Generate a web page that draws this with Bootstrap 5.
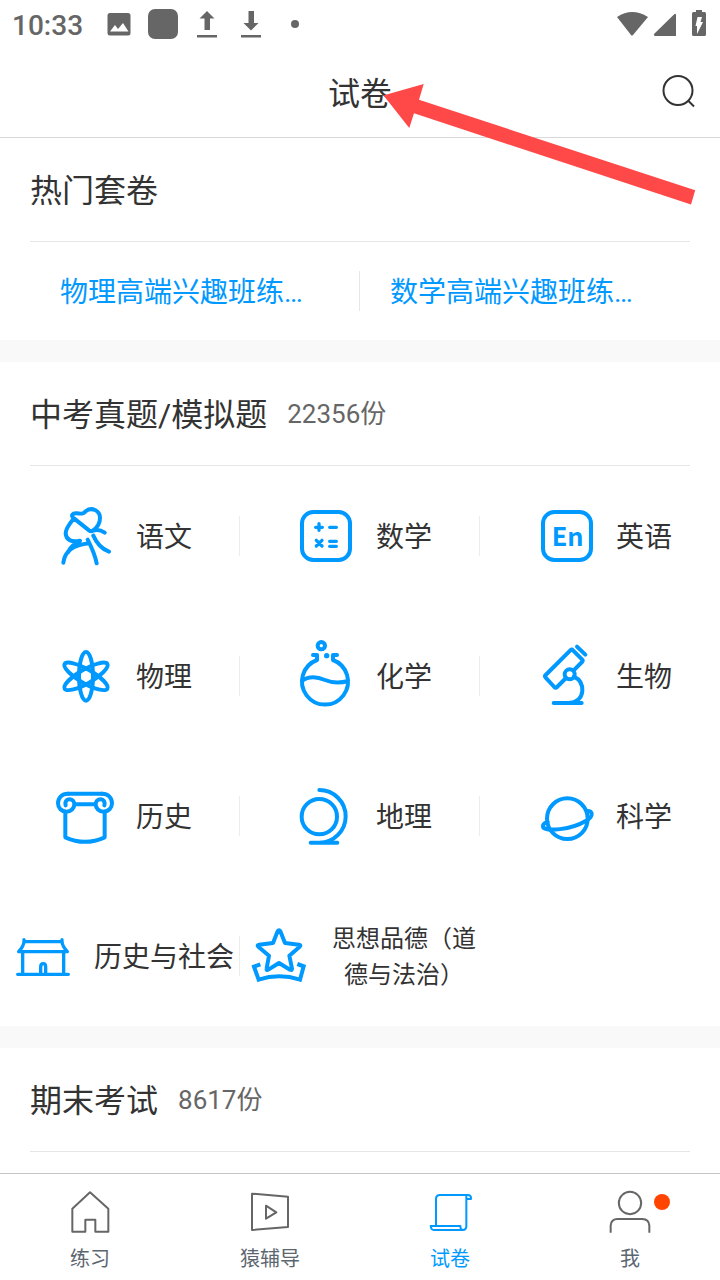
<!DOCTYPE html>
<html lang="zh-CN">
<head>
<meta charset="utf-8">
<meta name="viewport" content="width=device-width, initial-scale=1">
<title>试卷</title>
<link href="https://cdn.jsdelivr.net/npm/bootstrap@5.3.0/dist/css/bootstrap.min.css" rel="stylesheet">
<style>
  body { font-family: Roboto, "Noto Sans CJK SC", sans-serif; color: #333; background: #fff; }
  a { text-decoration: none; color: inherit; }
  svg { display: block; flex: none; }
  .status-bar { height: 48px; color: #666; padding: 0 4px 0 12px; }
  .clock { font-size: 28px; font-weight: 500; line-height: 44px; padding-top: 4px; width: 78px; }
  .status-left { gap: 14px; }
  .status-right { gap: 2px; }
  .page-head { height: 90px; border-bottom: 1px solid #d9d9d9; padding: 0 20px; }
  .head-side { width: 42px; height: 42px; }
  .title-text { font-size: 32px; line-height: 48px; font-weight: 400; padding-top: 2px; }
  .pointer { left: 56px; top: 16px; z-index: 2; pointer-events: none; }
  .section-inner { padding: 0 30px; }
  .section-head { height: 104px; border-bottom: 1px solid #e6e6e6; gap: 20px; }
  .count-text { font-size: 26px; line-height: 48px; color: #666; }
  .hot-link { height: 98px; padding: 4px 30px 0; font-size: 28px; line-height: 40px; color: #0099ff; }
  .divided { background: linear-gradient(#e6e6e6, #e6e6e6) right center / 1px 40px no-repeat; }
  .subject.divided { background-image: linear-gradient(#ececec, #ececec); }
  .band { height: 22px; background: #f9f9f9; }
  .subject { height: 140px; padding-left: 2px; gap: 14px; font-size: 28px; line-height: 40px; }
  .subject span { padding-top: 4px; }
  .subject .subject-long { font-size: 24px; line-height: 36px; text-align: center; padding-top: 2px; }
  .line-icon { fill: none; stroke: #0099ff; stroke-width: 12; stroke-linecap: round; stroke-linejoin: round; }
  .tab-strip { border-top: 1px solid #c4c4c4; background: #fff; padding-top: 14px; color: #5b6670; }
  .tab-strip a { font-size: 20px; line-height: 42px; }
  .tab-label { padding-top: 2px; }
  .tab-strip .current { color: #0099ff; }
  .tab-icon { fill: none; stroke: #666; stroke-width: 6; stroke-linejoin: round; }
  .current .tab-icon { stroke: #0099ff; }
  .alert-dot { left: 48px; top: 6px; width: 16px; height: 16px; background: #ff4400; }
</style>
</head>
<body>
<div class="d-flex flex-column min-vh-100">

  <div class="status-bar d-flex align-items-center justify-content-between">
    <div class="status-left d-flex align-items-center">
      <div class="clock">10:33</div>
      <svg width="30" height="30" viewBox="0 0 30 30" fill="currentColor"><rect x="3.500" y="4" width="23" height="22.500" rx="2.500"/><path d="M6 22.500 11 16l3 4 5-6 5.500 8.500z" fill="#fff"/></svg>
      <svg width="30" height="30" viewBox="0 0 30 30" fill="currentColor"><rect width="30" height="30" rx="7"/></svg>
      <svg width="30" height="30" viewBox="0 0 30 30" fill="currentColor"><path d="M15 2 22.500 9.500H18V21H12.500V9.500H7.500zM5 26h20v2.500H5z"/></svg>
      <svg width="30" height="30" viewBox="0 0 30 30" fill="currentColor"><path d="M12.500 2H18V14h4.500L15 21.500 7.500 14h5zM5 26h20v2.500H5z"/></svg>
      <svg width="30" height="30" viewBox="0 0 30 30" fill="currentColor"><circle cx="15" cy="15" r="4"/></svg>
    </div>
    <div class="status-right d-flex">
      <svg width="32" height="30" viewBox="0 0 32 30" fill="currentColor"><path d="M1 8Q16-2 32 8L17 26Q16 27 15 26z"/></svg>
      <svg width="32" height="30" viewBox="0 0 32 30" fill="currentColor"><path d="M26 6V27H5Q3 26 4.500 24.500L24 5.500Q25.500 4 26 6z"/></svg>
      <svg width="32" height="30" viewBox="0 0 32 30" fill="currentColor"><path d="M12 1h6v2h2.500Q22 3 22 4.500V25.500Q22 27 20.500 27H9.500Q8 27 8 25.500V4.500Q8 3 9.500 3H12z"/><path d="M13.500 8H18L16.500 13H19L13 25V17H11.500z" fill="#fff"/></svg>
    </div>
  </div>

  <header class="page-head d-flex align-items-center justify-content-between">
    <div class="head-side"></div>
    <div class="position-relative">
      <h1 class="title-text mb-0">试卷</h1>
      <svg class="pointer position-absolute" width="312" height="121" viewBox="384 84 312 121" fill="#ff4848"><path d="M383.500 95.300 423.700 84 419 99.700 695.200 190.300 691 204.600 414 113.300 409.300 128z"/></svg>
    </div>
    <button type="button" class="head-side btn p-0 border-0" aria-label="搜索">
      <svg width="42" height="42" viewBox="658 72 42 42" fill="none" stroke="#333" stroke-width="2"><circle cx="678" cy="90.500" r="14.500"/><path d="M688 100.500 694 106.500"/></svg>
    </button>
  </header>

  <main>
    <section class="section-inner">
      <div class="section-head d-flex align-items-center"><h2 class="title-text mb-0">热门套卷</h2></div>
      <div class="row g-0">
        <a href="#" class="col-6 hot-link divided d-flex align-items-center text-nowrap">物理高端兴趣班练…</a>
        <a href="#" class="col-6 hot-link d-flex align-items-center text-nowrap">数学高端兴趣班练…</a>
      </div>
    </section>
    <div class="band"></div>

    <section>
      <div class="section-inner">
        <div class="section-head d-flex align-items-center"><h2 class="title-text mb-0">中考真题/模拟题</h2><span class="count-text">22356份</span></div>
      </div>
      <div class="row g-0">
        <a href="#" class="col-4 subject divided d-flex align-items-center justify-content-center">
          <svg class="line-icon" width="72" height="72" viewBox="30 30 216 216"><path d="M100 84C92 76 98 69 110 70C134 73 132 68 138 63C154 51 180 60 180 84C180 103 168 116 157 123Q152 125 147 121L102 85C92 97 77 114 77 130C78 149 94 158 120 152M157 123C169 118 184 121 194 128M160 137Q176 174 207 185M143 149Q164 190 170 220M70 218C75 182 99 165 148 160M85 186Q93 165 119 154"/></svg>
          <span>语文</span></a>
        <a href="#" class="col-4 subject divided d-flex align-items-center justify-content-center">
          <svg class="line-icon" width="72" height="72" viewBox="30 30 216 216"><rect x="66" y="66" width="144" height="144" rx="34"/><g stroke-width="10"><path d="M107 112H127M117 101V121M149 112H169M109 151 126 168M126 151 109 168M149 154H169M149 169H169"/></g></svg>
          <span>数学</span></a>
        <a href="#" class="col-4 subject d-flex align-items-center justify-content-center">
          <svg class="line-icon" width="72" height="72" viewBox="750 30 216 216"><rect x="789" y="66" width="144" height="144" rx="34"/><text x="863" y="167" text-anchor="middle" font-family="Noto Sans CJK SC, sans-serif" font-weight="700" font-size="76" fill="#0099ff" stroke="none">En</text></svg>
          <span>英语</span></a>

        <a href="#" class="col-4 subject divided d-flex align-items-center justify-content-center">
          <svg class="line-icon" width="72" height="72" viewBox="30 30 216 216"><ellipse cx="138" cy="139" rx="21" ry="73"/><ellipse cx="138" cy="139" rx="21" ry="74" transform="rotate(60 138 139)"/><ellipse cx="138" cy="139" rx="21" ry="74" transform="rotate(-60 138 139)"/></svg>
          <span>物理</span></a>
        <a href="#" class="col-4 subject divided d-flex align-items-center justify-content-center">
          <svg class="line-icon" width="72" height="72" viewBox="30 30 216 216"><path d="M99 75H111V90A69 69 0 1 0 159 90V75H171M66 153C86 138 111 140 135 150S180 160 204 153"/><circle cx="124" cy="47" r="11"/><circle cx="140" cy="77" r="8" fill="#0099ff" stroke="none"/></svg>
          <span>化学</span></a>
        <a href="#" class="col-4 subject d-flex align-items-center justify-content-center">
          <svg class="line-icon" width="72" height="72" viewBox="750 30 216 216"><path d="M858 144 831 171Q827 175 823 171L797 143Q793 139 797 135L871 61Q875 57 879 61L906 88Q910 92 906 96L881 121M891 50 916 74M882 140C903 150 908 166 907 183C905 205 889 219 865 219M821 219H905"/><circle cx="869" cy="133" r="15"/></svg>
          <span>生物</span></a>

        <a href="#" class="col-4 subject divided d-flex align-items-center justify-content-center">
          <svg class="line-icon" width="72" height="72" viewBox="30 30 216 216"><path d="M76 125V202Q135 229 194 202V125M84 71H187M106 103H165"/><path id="scroll-end" d="M85 71C66 70 54 84 54 100C54 114 65 125 79 125C93 125 103 115 103 103C103 94 97 88 88 88C79 88 74 96 77 106"/><use href="#scroll-end" transform="translate(270 0) scale(-1 1)"/></svg>
          <span>历史</span></a>
        <a href="#" class="col-4 subject divided d-flex align-items-center justify-content-center">
          <svg class="line-icon" width="72" height="72" viewBox="30 30 216 216"><circle cx="118" cy="140" r="53"/><path d="M118 60A79 79 0 0 1 118 218M92 218H172"/></svg>
          <span>地理</span></a>
        <a href="#" class="col-4 subject d-flex align-items-center justify-content-center">
          <svg class="line-icon" width="72" height="72" viewBox="750 30 216 216"><circle cx="862" cy="146" r="61"/><path d="M803 156C791 159 787 166 789 171C797 186 874 179 917 153C938 143 943 121 920 123"/></svg>
          <span>科学</span></a>

        <a href="#" class="col-4 subject divided d-flex align-items-center justify-content-center">
          <svg class="line-icon" width="72" height="72" viewBox="24 30 216 216"><g stroke-width="10"><path d="M72 89V95Q71 109 56 125H202Q187 109 186 95V89M72 95H186M68 125V193M191 125V193M53 193H205M122 191V171Q122 161 130 161Q137 161 137 171V191"/></g></svg>
          <span>历史与社会</span></a>
        <a href="#" class="col-4 subject d-flex align-items-center justify-content-center">
          <svg class="line-icon" width="72" height="72" viewBox="726 30 216 216"><path d="M833 64Q837 57 841 64L855 99 897 104Q904 106 899 110L868 137 876 176Q877 182 870 179L837 159 805 179Q798 182 800 175L807 137 775 110Q770 105 777 104L819 99z"/><path stroke-linecap="butt" stroke-linejoin="miter" d="M781 163 762 170 776 209Q837 189 900 209L911 169 892 162"/></svg>
          <span class="subject-long">思想品德（道德与法治）</span></a>
      </div>
    </section>
    <div class="band"></div>

    <section class="section-inner">
      <div class="section-head d-flex align-items-center"><h2 class="title-text mb-0">期末考试</h2><span class="count-text">8617份</span></div>
    </section>
  </main>

  <nav class="tab-strip sticky-bottom mt-auto">
    <div class="row g-0">
      <a href="#" class="col-3 d-flex flex-column align-items-center">
        <svg class="tab-icon" width="48" height="48" viewBox="198 84 144 144"><path d="M270 97 325 146V215H286V179H256V215H217V146z"/></svg>
        <span class="tab-label">练习</span></a>
      <a href="#" class="col-3 d-flex flex-column align-items-center">
        <svg class="tab-icon" width="48" height="48" viewBox="738 84 144 144"><path d="M756 101 864 110V201L756 210zM798 137 829 157 798 176z"/></svg>
        <span class="tab-label">猿辅导</span></a>
      <a href="#" class="col-3 current d-flex flex-column align-items-center" aria-current="page">
        <svg class="tab-icon" width="48" height="48" viewBox="198 84 144 144"><path d="M228 197V117Q228 105 240 105H325Q334 106 333 117H319M319 105V198Q319 210 308 210Q301 210 301 198H212Q213 210 222 210H308"/></svg>
        <span class="tab-label">试卷</span></a>
      <a href="#" class="col-3 d-flex flex-column align-items-center">
        <span class="position-relative"><svg class="tab-icon" width="48" height="48" viewBox="738 84 144 144"><circle cx="810" cy="129" r="33.500"/><path d="M752 218V197Q753 177 773 177H847Q867 178 868 197V218"/></svg><i class="alert-dot position-absolute rounded-circle"></i></span>
        <span class="tab-label">我</span></a>
    </div>
  </nav>
</div>
<script src="https://cdn.jsdelivr.net/npm/bootstrap@5.3.0/dist/js/bootstrap.bundle.min.js"></script>
</body>
</html>
